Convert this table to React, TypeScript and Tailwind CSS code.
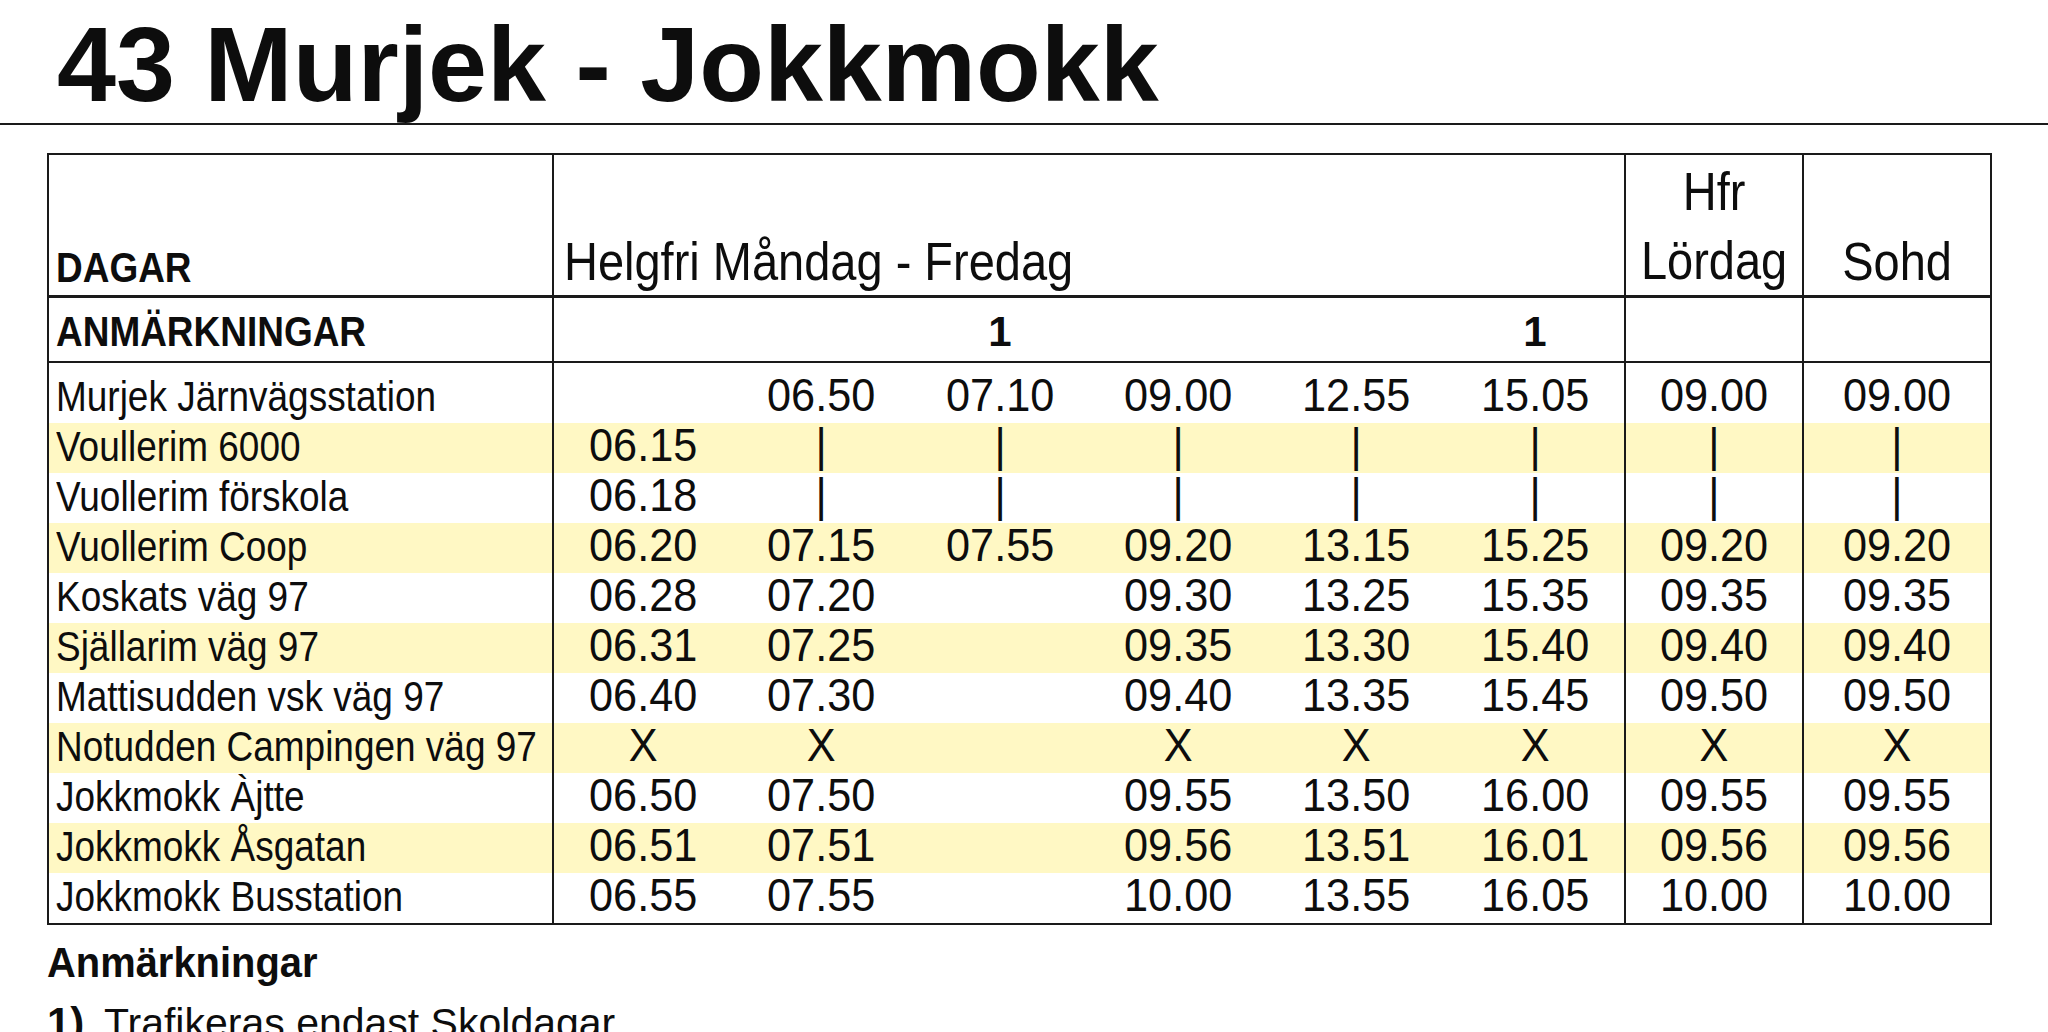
import React from 'react';

interface Stop {
  name: string;
  times: string[];
  highlight?: boolean;
}

const stops: Stop[] = [
  { name: 'Murjek Järnvägsstation', times: ['', '06.50', '07.10', '09.00', '12.55', '15.05', '09.00', '09.00'] },
  { name: 'Voullerim 6000', times: ['06.15', '|', '|', '|', '|', '|', '|', '|'], highlight: true },
  { name: 'Vuollerim förskola', times: ['06.18', '|', '|', '|', '|', '|', '|', '|'] },
  { name: 'Vuollerim Coop', times: ['06.20', '07.15', '07.55', '09.20', '13.15', '15.25', '09.20', '09.20'], highlight: true },
  { name: 'Koskats väg 97', times: ['06.28', '07.20', '', '09.30', '13.25', '15.35', '09.35', '09.35'] },
  { name: 'Själlarim väg 97', times: ['06.31', '07.25', '', '09.35', '13.30', '15.40', '09.40', '09.40'], highlight: true },
  { name: 'Mattisudden vsk väg 97', times: ['06.40', '07.30', '', '09.40', '13.35', '15.45', '09.50', '09.50'] },
  { name: 'Notudden Campingen väg 97', times: ['X', 'X', '', 'X', 'X', 'X', 'X', 'X'], highlight: true },
  { name: 'Jokkmokk Àjtte', times: ['06.50', '07.50', '', '09.55', '13.50', '16.00', '09.55', '09.55'] },
  { name: 'Jokkmokk Åsgatan', times: ['06.51', '07.51', '', '09.56', '13.51', '16.01', '09.56', '09.56'], highlight: true },
  { name: 'Jokkmokk Busstation', times: ['06.55', '07.55', '', '10.00', '13.55', '16.05', '10.00', '10.00'] },
];

const remarks = ['', '', '1', '', '', '1'];

const StopRow: React.FC<{ stop: Stop; first: boolean }> = ({ stop, first }) => {
  const pad = first ? 'pt-[10px]' : '';
  const weekday = stop.times.slice(0, 6);
  const time = 'scale-x-[0.94] text-center text-[46px] leading-[45px]';
  return (
    <div className={`flex ${first ? 'h-[60px]' : 'h-[50px]'} ${stop.highlight ? 'bg-[#fff8c4]' : ''}`}>
      <div className={`w-[505px] border-r-2 border-[#1a1a1a] pl-[7px] ${pad}`}>
        <span className="block origin-left scale-x-[0.88] whitespace-nowrap text-[42px] leading-[47px]">{stop.name}</span>
      </div>
      <div className={`grid w-[1072px] grid-cols-6 border-r-2 border-[#1a1a1a] ${pad}`}>
        {weekday.map((t, i) => (
          <div key={i} className={time}>
            {t}
          </div>
        ))}
      </div>
      <div className={`w-[178px] border-r-2 border-[#1a1a1a] ${pad}`}>
        <div className={time}>{stop.times[6]}</div>
      </div>
      <div className={`flex-1 ${pad}`}>
        <div className={time}>{stop.times[7]}</div>
      </div>
    </div>
  );
};

export default function App() {
  return (
    <div className="min-h-screen bg-white font-['Liberation_Sans',Arial,sans-serif] text-[#0d0d0d]">
      {/* Title */}
      <div className="pl-[57px] pt-[11px]">
        <h1 className="whitespace-nowrap text-[106px] font-bold leading-none">43 Murjek - Jokkmokk</h1>
      </div>
      <div className="mt-[6px] h-[2px] bg-[#1a1a1a]" />

      {/* Timetable */}
      <div className="ml-[47px] mt-[28px] w-[1945px] border-2 border-[#1a1a1a]">
        {/* DAGAR */}
        <div className="flex h-[143px] border-b-[3px] border-[#1a1a1a]">
          <div className="flex w-[505px] items-end border-r-2 border-[#1a1a1a] pb-[6px] pl-[7px]">
            <span className="block origin-left scale-x-[0.88] text-[42px] font-bold leading-none">DAGAR</span>
          </div>
          <div className="flex w-[1072px] items-end border-r-2 border-[#1a1a1a] pl-[10px]">
            <span className="block origin-left scale-x-[0.87] whitespace-nowrap text-[54px] leading-[67px]">
              Helgfri Måndag - Fredag
            </span>
          </div>
          <div className="flex w-[178px] items-end justify-center border-r-2 border-[#1a1a1a]">
            <span className="inline-block scale-x-[0.87] text-center text-[54px] leading-[69px]">
              Hfr
              <br />
              Lördag
            </span>
          </div>
          <div className="flex flex-1 items-end justify-center">
            <span className="inline-block scale-x-[0.87] text-[54px] leading-[67px]">Sohd</span>
          </div>
        </div>

        {/* ANMÄRKNINGAR */}
        <div className="flex h-[65px] border-b-2 border-[#1a1a1a]">
          <div className="w-[505px] border-r-2 border-[#1a1a1a] pl-[7px] pt-[13px]">
            <span className="block origin-left scale-x-[0.88] whitespace-nowrap text-[42px] font-bold leading-none">
              ANMÄRKNINGAR
            </span>
          </div>
          <div className="grid w-[1072px] grid-cols-6 border-r-2 border-[#1a1a1a] pt-[13px]">
            {remarks.map((r, i) => (
              <div key={i} className="text-center text-[42px] font-bold leading-none">
                {r}
              </div>
            ))}
          </div>
          <div className="w-[178px] border-r-2 border-[#1a1a1a]" />
          <div className="flex-1" />
        </div>

        {stops.map((s, i) => (
          <StopRow key={s.name} stop={s} first={i === 0} />
        ))}
      </div>

      {/* Notes */}
      <div className="pl-[47px] pt-[17px]">
        <span className="block origin-left scale-x-[0.95] text-[42px] font-bold leading-none">Anmärkningar</span>
        <div className="mt-[18px] flex items-baseline whitespace-nowrap">
          <span className="w-[57px] text-[42px] font-bold leading-none">1)</span>
          <span className="text-[41px] leading-none">Trafikeras endast Skoldagar.</span>
        </div>
      </div>
    </div>
  );
}
